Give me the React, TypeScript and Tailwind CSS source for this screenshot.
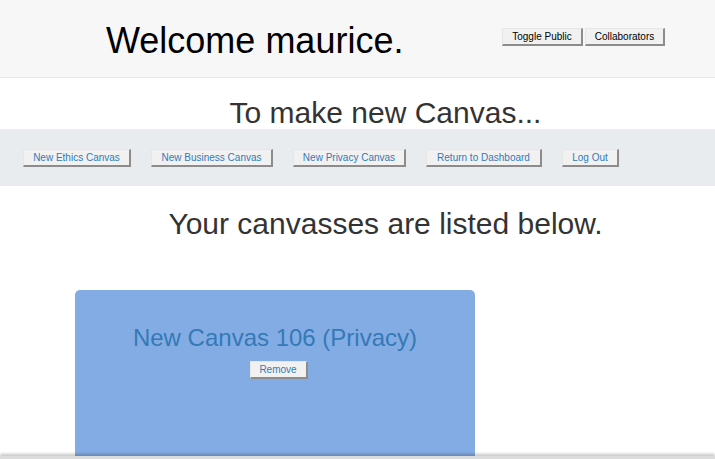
import React from "react";

const btn =
  "bg-[#f1f1f1] border-t border-l border-t-[#e6e6e6] border-l-[#e6e6e6] border-r-2 border-b-2 border-r-[#8c8c8c] border-b-[#8c8c8c] text-[10px] leading-[13px] py-[1px]";

export default function App() {
  return (
    <div className="min-h-[700px] bg-white" style={{ fontFamily: '"Liberation Sans", Arial, sans-serif' }}>
      <header className="h-[78px] bg-[#f7f7f7] border-b border-[#e6e6e6] flex items-center pl-[106px] pr-[50px]">
        <h1 className="text-[36px] leading-[40px] text-black mt-[4px]">Welcome maurice.</h1>
        <div className="ml-auto flex gap-[2px] -mt-[4px]">
          <button className={`${btn} text-black px-[9px] w-[81px]`}>Toggle Public</button>
          <button className={`${btn} text-black px-[7px] w-[80px]`}>Collaborators</button>
        </div>
      </header>
      <div className="h-[51px] pt-[18px] pl-[56px] text-center">
        <h2 className="text-[30px] leading-[34px] text-[#333]">To make new Canvas...</h2>
      </div>
      <nav className="h-[57px] bg-[#e9ecef] flex items-center pl-[23px] gap-[20px]">
        <button className={`${btn} text-[#337ab7] w-[108px]`}>New Ethics Canvas</button>
        <button className={`${btn} text-[#337ab7] w-[122px]`}>New Business Canvas</button>
        <button className={`${btn} text-[#337ab7] w-[113px]`}>New Privacy Canvas</button>
        <button className={`${btn} text-[#337ab7] w-[116px]`}>Return to Dashboard</button>
        <button className={`${btn} text-[#337ab7] w-[57px]`}>Log Out</button>
      </nav>
      <div className="pt-[21px] pl-[56px] text-center">
        <h2 className="text-[30px] leading-[34px] text-[#333]">Your canvasses are listed below.</h2>
      </div>
      <div className="pl-[75px] pt-[49px]">
        <div className="w-[400px] h-[220px] bg-[#84ace4] rounded-[5px] pt-[34px] flex flex-col items-center">
          <h3 className="text-[24px] leading-[28px] text-[#337ab7]">New Canvas 106 (Privacy)</h3>
          <button className={`${btn} text-[#337ab7] w-[58px] mt-[9px] ml-[7px] py-[1px]`}>Remove</button>
        </div>
      </div>
      <div className="fixed left-0 right-0 bottom-0 h-[3px] bg-[#dcdcdc] shadow-[0_-2px_3px_rgba(0,0,0,0.25)]" />
    </div>
  );
}
